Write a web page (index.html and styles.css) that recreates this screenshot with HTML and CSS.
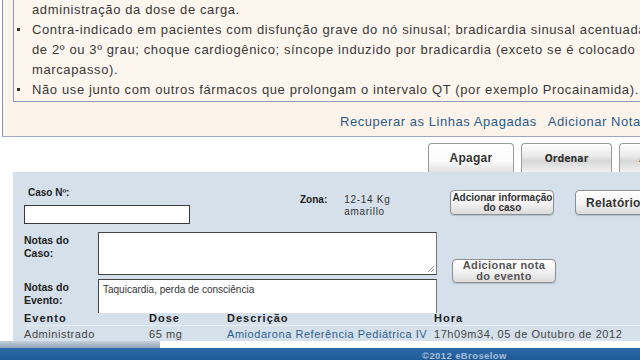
FILE: index.html
```html
<!DOCTYPE html>
<html lang="pt">
<head>
<meta charset="utf-8">
<link rel="stylesheet" href="styles.css">
</head>
<body>
<div class="page">
  <div class="notes">
    <div class="note-box">
      <div class="cont">administração da dose de carga.</div>
      <ul class="bullets">
        <li>Contra-indicado em pacientes com disfunção grave do nó sinusal; bradicardia sinusal acentuada<br>de 2º ou 3º grau; choque cardiogênico; síncope induzido por bradicardia (exceto se é colocado<br>marcapasso).</li>
        <li>Não use junto com outros fármacos que prolongam o intervalo QT (por exemplo Procainamida).</li>
      </ul>
    </div>
    <div class="links">
      <a class="link">Recuperar as Linhas Apagadas</a>
      <a class="link">Adicionar Nota</a>
    </div>
  </div>

  <div class="tabs">
    <div class="tab tab-main">Apagar</div>
    <div class="tab tab-narrow">Ordenar</div>
    <div class="tab tab-narrow">Adicionar</div>
  </div>

  <div class="panel">
    <div class="row1">
      <div class="caso">
        <div class="lbl">Caso Nº:</div>
        <div class="input"></div>
      </div>
      <div class="zona">
        <span class="lbl">Zona:</span>
        <span class="zval">12-14 Kg<br>amarillo</span>
      </div>
      <div class="btn btn-small">Adcionar informação<br>do caso</div>
      <div class="btn btn-rel">Relatório</div>
    </div>

    <div class="notes-grid">
      <div class="lbl nlbl">Notas do<br>Caso:</div>
      <div class="area area-case"><span class="grip"></span></div>
      <div class="btn btn-note">Adicionar nota<br>do evento</div>
      <div class="lbl nlbl">Notas do<br>Evento:</div>
      <div class="area area-event">Taquicardia, perda de consciência</div>
    </div>

    <div class="tbl">
      <div class="tr th">
        <div class="c1">Evento</div>
        <div class="c2">Dose</div>
        <div class="c3">Descrição</div>
        <div class="c4">Hora</div>
      </div>
      <div class="tr td">
        <div class="c1">Administrado</div>
        <div class="c2">65 mg</div>
        <div class="c3 blue">Amiodarona Referência Pediátrica IV</div>
        <div class="c4">17h09m34, 05 de Outubro de 2012</div>
      </div>
    </div>
  </div>

  <div class="strip"><div class="strip-gray"></div></div>
  <div class="footer">©2012 eBroselow</div>
</div>
</body>
</html>
```

FILE: styles.css
```css
html, body {
  margin: 0;
  padding: 0;
}
body {
  width: 640px;
  height: 360px;
  overflow: hidden;
  background: #ffffff;
  font-family: "Liberation Sans", Arial, sans-serif;
  color: #333333;
}
.page {
  width: 930px;
}

/* notes panel */
.notes {
  margin-left: 2px;
  border-left: 1px solid #8294b8;
  border-bottom: 1px solid #9ca8c0;
  background: #fcf4ea;
  padding-left: 10px;
  height: 136px;
}
.note-box {
  border: 1px solid #8d9ab3;
  border-top: none;
  background: #fdf6ee;
  height: 102px;
  box-sizing: border-box;
  font-size: 13px;
  line-height: 20px;
  letter-spacing: 0.62px;
  color: #383838;
  white-space: nowrap;
  padding-left: 18px;
}
.bullets {
  list-style: none;
  margin: 0;
  padding: 0;
}
.bullets li {
  position: relative;
}
.bullets li::before {
  content: "";
  position: absolute;
  left: -15px;
  top: 8px;
  width: 3px;
  height: 3px;
  background: #333;
}
.links {
  display: flex;
  gap: 11px;
  padding-left: 327px;
  padding-top: 13px;
  font-size: 13px;
  line-height: 14px;
  letter-spacing: 0.55px;
  white-space: nowrap;
}
.link {
  color: #2c5a8a;
}

/* tabs */
.tabs {
  display: flex;
  gap: 7px;
  padding-left: 428px;
  padding-top: 6px;
  height: 29px;
}
.tab {
  width: 86px;
  height: 29px;
  box-sizing: border-box;
  border: 1px solid #9a9a9a;
  border-bottom: none;
  border-radius: 4px 4px 0 0;
  display: flex;
  align-items: center;
  justify-content: center;
  font-weight: bold;
  color: #333;
}
.tab-main {
  font-size: 12px;
  letter-spacing: 0.3px;
  background: linear-gradient(#ffffff 0%, #fbfbfb 60%, #e2e2e2 100%);
}
.tab-narrow {
  width: 91px;
  font-family: "DejaVu Sans Condensed", "Liberation Sans", sans-serif;
  font-size: 10.5px;
  background: linear-gradient(#ffffff 0%, #e9e9e9 45%, #d7d7d7 60%, #f0f0f0 100%);
}

/* blue panel */
.panel {
  margin-left: 13px;
  background: #d5e0ea;
  height: 169px;
  padding: 14px 0 0 11px;
  box-sizing: border-box;
}
.lbl {
  font-weight: bold;
  font-size: 10px;
  color: #222;
}
.row1 {
  display: flex;
  align-items: flex-start;
  height: 46px;
}
.caso .lbl {
  padding-left: 4px;
  line-height: 14px;
}
.input {
  margin-top: 5px;
  width: 166px;
  height: 19px;
  box-sizing: border-box;
  background: #ffffff;
  border: 1px solid #3a3a3a;
}
.zona {
  display: flex;
  margin-left: 110px;
  margin-top: 8px;
  line-height: 12px;
  gap: 17px;
}
.zona .lbl {
  line-height: 12px;
}
.zval {
  font-size: 10px;
  letter-spacing: 0.7px;
  color: #333;
}
.btn {
  box-sizing: border-box;
  border: 1px solid #8e8e8e;
  border-radius: 4px;
  background: linear-gradient(#ffffff 0%, #f4f4f4 50%, #dcdcdc 100%);
  display: flex;
  align-items: center;
  justify-content: center;
  text-align: center;
  font-weight: bold;
  color: #333;
  box-shadow: 0 1px 1px rgba(0,0,0,0.15);
}
.btn-small {
  margin-left: 60px;
  margin-top: 4px;
  width: 104px;
  height: 25px;
  font-size: 10px;
  line-height: 10px;
}
.btn-rel {
  margin-left: 21px;
  margin-top: 4px;
  width: 76px;
  height: 25px;
  font-size: 12px;
  letter-spacing: 0.3px;
}

.notes-grid {
  display: grid;
  grid-template-columns: 74px 339px auto;
  grid-template-rows: 43px 32px;
  row-gap: 4px;
  align-items: start;
}
.nlbl {
  padding-top: 2px;
  line-height: 13px;
  font-size: 10.5px;
}
.area {
  background: #ffffff;
  border: 1px solid #444;
  border-right-color: #777;
  box-sizing: border-box;
  position: relative;
  height: 43px;
}
.area-event {
  height: 34px;
  border-bottom: none;
  font-size: 10px;
  padding: 4px 0 0 4px;
  color: #333;
}
.grip {
  position: absolute;
  right: 2px;
  bottom: 2px;
  width: 6px;
  height: 6px;
  background: linear-gradient(135deg, transparent 45%, #999 45%, #999 55%, transparent 55%, transparent 70%, #999 70%, #999 80%, transparent 80%);
}
.btn-note {
  grid-column: 3;
  grid-row: 1 / 3;
  margin-left: 15px;
  margin-top: 27px;
  width: 104px;
  height: 24px;
  font-size: 11px;
  line-height: 11px;
  letter-spacing: 0.4px;
  color: #555;
}

.tbl {
  font-size: 11px;
}
.tr {
  display: flex;
  height: 14px;
  line-height: 14px;
}
.th {
  font-weight: bold;
  color: #222;
  letter-spacing: 1px;
  padding-top: 0;
}
.td {
  border-top: 1px solid #e8eef4;
  color: #444;
  letter-spacing: 0.55px;
  padding-top: 1px;
}
.c1 { width: 125px; }
.c2 { width: 78px; }
.c3 { width: 207px; white-space: nowrap; }
.c4 { white-space: nowrap; }
.blue { color: #2c5f8e; }

.strip {
  height: 7px;
  background: #ffffff;
}
.strip-gray {
  width: 160px;
  height: 7px;
  background: linear-gradient(#c6d1dc, #8ea2b8);
}
.footer {
  height: 14px;
  background: linear-gradient(#2b6aa8, #1d5893);
  color: #a8bfd8;
  font-size: 9.5px;
  font-weight: bold;
  letter-spacing: 0.4px;
  line-height: 15px;
  padding-left: 422px;
}
```
